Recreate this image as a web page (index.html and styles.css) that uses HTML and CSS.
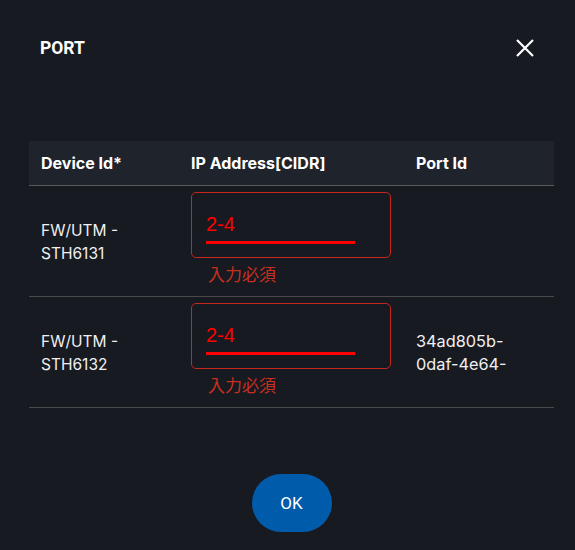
FILE: index.html
```html
<!DOCTYPE html>
<html lang="ja">
<head>
<meta charset="utf-8">
<link rel="stylesheet" href="styles.css">
</head>
<body>
<div class="dialog">
  <div class="head">
    <h1 class="title">PORT</h1>
    <button class="close" aria-label="close">
      <svg width="18" height="18" viewBox="0 0 18 18"><path d="M1 1L17 17M17 1L1 17" stroke="#fff" stroke-width="2.2" fill="none"/></svg>
    </button>
  </div>
  <table class="grid">
    <thead>
      <tr><th class="c1">Device Id*</th><th class="c2">IP Address[CIDR]</th><th class="c3">Port Id</th></tr>
    </thead>
    <tbody>
      <tr>
        <td class="c1">FW/UTM -<br>STH6131</td>
        <td class="c2">
          <div class="field"><span class="val">2-4</span><span class="line"></span></div>
          <div class="err">入力必須</div>
        </td>
        <td class="c3"></td>
      </tr>
      <tr>
        <td class="c1">FW/UTM -<br>STH6132</td>
        <td class="c2">
          <div class="field"><span class="val">2-4</span><span class="line"></span></div>
          <div class="err">入力必須</div>
        </td>
        <td class="c3 pid">34ad805b-<br>0daf-4e64-</td>
      </tr>
    </tbody>
  </table>
  <div class="foot"><button class="ok">OK</button></div>
</div>
</body>
</html>
```
FILE: styles.css
```css
html, body { margin: 0; padding: 0; }
body {
  background: #171a21;
  color: #f2f2f2;
  font-family: Inter, "Noto Sans", sans-serif;
  width: 575px;
  height: 550px;
  overflow: hidden;
}
.dialog { padding: 0 21px 0 29px; }
.head {
  display: flex;
  justify-content: space-between;
  align-items: center;
  height: 96px;
  padding-left: 11px;
  padding-right: 20px;
}
.title {
  margin: 0;
  font-family: Roboto, sans-serif;
  font-size: 17.5px;
  font-weight: 700;
  color: #fff;
  margin-top: -1px;
}
.close {
  background: none;
  border: 0;
  padding: 0;
  width: 18px;
  height: 18px;
  display: block;
  margin-top: -1px;
}
.close svg { display: block; }
.grid {
  margin-top: 45px;
  width: 525px;
  border-collapse: collapse;
  table-layout: fixed;
}
.grid th {
  background: #1f232b;
  height: 44px;
  text-align: left;
  font-family: Inter, sans-serif;
  font-size: 16px;
  font-weight: 700;
  color: #fff;
  padding: 0 12px;
  border-bottom: 1px solid #5a5a5a;
}
.grid .c1 { width: 126px; }
.grid .c2 { width: 201px; }
.grid .c3 { width: 126px; }
.grid td {
  font-size: 15.5px;
  line-height: 23px;
  padding: 4px 12px 2px;
  height: 104px;
  vertical-align: middle;
  border-bottom: 1px solid #4a4a4a;
  color: #f0f0f0;
}
.grid td.pid { font-size: 16.3px; }
.grid td.c2 { vertical-align: top; padding-top: 6px; padding-bottom: 0; }
.field {
  box-sizing: border-box;
  width: 200px;
  height: 66px;
  border: 1px solid #c7261c;
  border-radius: 5px;
  padding: 20px 0 0 14px;
  display: flex;
  flex-direction: column;
}
.val {
  font-family: "Liberation Sans", Arial, sans-serif;
  font-size: 20px;
  line-height: 22px;
  color: #ff0000;
}
.line {
  display: block;
  width: 149px;
  height: 3px;
  background: #ff0000;
  margin-top: 6px;
}
.err {
  font-family: "Noto Sans CJK JP", sans-serif;
  font-size: 17px;
  line-height: 22px;
  color: #c7301f;
  padding: 5px 0 0 17px;
}
.foot {
  display: flex;
  justify-content: center;
  padding-top: 66px;
}
.ok {
  width: 80px;
  height: 58px;
  border: 0;
  border-radius: 29px;
  background: #005bab;
  color: #fff;
  font-family: Roboto, sans-serif;
  font-size: 17px;
  font-weight: 400;
}
```
